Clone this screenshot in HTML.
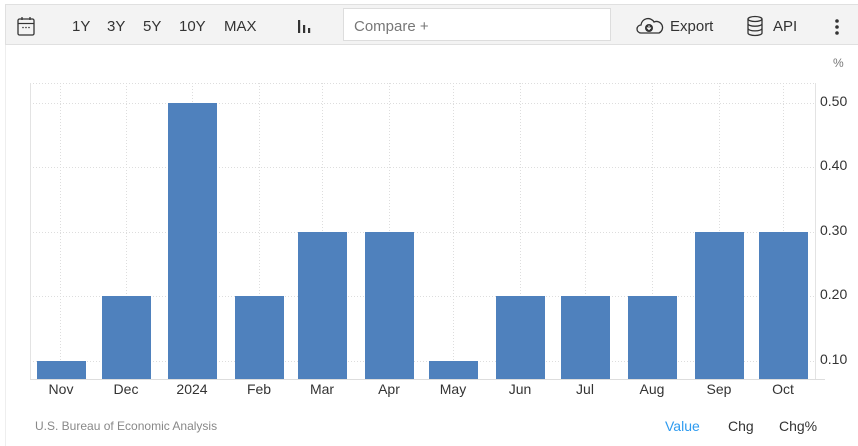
<!DOCTYPE html>
<html><head><style>
body{margin:0;width:858px;height:446px;background:#fff;font-family:"Liberation Sans",Arial,sans-serif;position:relative;overflow:hidden}
.tb{position:absolute;left:5px;top:4px;width:853px;height:41px;background:#f3f3f3;border:1px solid #e0e0e0;border-right:none;box-sizing:border-box}
.t{position:absolute;font-size:15px;color:#333;top:18px}
.cmp{position:absolute;left:343px;top:8px;width:268px;height:33px;background:#fff;border:1px solid #ddd;box-sizing:border-box;font-size:15px;color:#777;padding:9px 10px}
</style></head><body>
<div class="tb"></div>
<div style="position:absolute;left:5px;top:45px;width:1px;height:401px;background:#eee"></div>
<svg style="position:absolute;left:17px;top:16px" width="20" height="22" viewBox="0 0 20 22"><rect x="1" y="3" width="16" height="16" rx="1.5" fill="none" stroke="#333" stroke-width="1.3"/><line x1="1" y1="7.5" x2="17" y2="7.5" stroke="#333" stroke-width="1.2"/><line x1="5" y1="1" x2="5" y2="4" stroke="#333" stroke-width="1.3"/><line x1="13" y1="1" x2="13" y2="4" stroke="#333" stroke-width="1.3"/><circle cx="6" cy="11.5" r=".8" fill="#333"/><circle cx="9" cy="11.5" r=".8" fill="#333"/><circle cx="12" cy="11.5" r=".8" fill="#333"/></svg>
<div class="t" style="left:72px">1Y</div>
<div class="t" style="left:107px">3Y</div>
<div class="t" style="left:143px">5Y</div>
<div class="t" style="left:179px">10Y</div>
<div class="t" style="left:224px">MAX</div>
<svg style="position:absolute;left:297px;top:18px" width="16" height="16"><rect x="1" y="2" width="2.2" height="13" fill="#333"/><rect x="6" y="7" width="2.2" height="8" fill="#333"/><rect x="11" y="10" width="2.2" height="5" fill="#333"/></svg>
<div class="cmp">Compare +</div>
<svg style="position:absolute;left:636px;top:16px" width="28" height="20" viewBox="0 0 28 20"><path d="M7 17H5a4 4 0 0 1 0-8 a7 7 0 0 1 13-3 a5 5 0 0 1 5 11H7z" fill="none" stroke="#333" stroke-width="1.3"/><circle cx="13" cy="12" r="4" fill="#333"/><path d="M11 11.5l2 2 2-2M13 9.5v4" stroke="#fff" stroke-width="1.1" fill="none"/></svg>
<div class="t" style="left:670px">Export</div>
<svg style="position:absolute;left:746px;top:15px" width="18" height="22" viewBox="0 0 18 22"><ellipse cx="9" cy="4" rx="7" ry="2.5" fill="none" stroke="#333" stroke-width="1.3"/><path d="M2 4v14c0 1.4 3.1 2.5 7 2.5s7-1.1 7-2.5V4M2 8.7c0 1.4 3.1 2.5 7 2.5s7-1.1 7-2.5M2 13.4c0 1.4 3.1 2.5 7 2.5s7-1.1 7-2.5" fill="none" stroke="#333" stroke-width="1.3"/></svg>
<div class="t" style="left:773px">API</div>
<svg style="position:absolute;left:834px;top:18px" width="6" height="18"><circle cx="3" cy="3" r="1.8" fill="#333"/><circle cx="3" cy="9" r="1.8" fill="#333"/><circle cx="3" cy="15" r="1.8" fill="#333"/></svg>
<div style="position:absolute;left:833px;top:56px;font-size:12px;color:#777">%</div>
<svg style="position:absolute;left:0;top:0" width="858" height="446">
<g stroke="#ddd" stroke-dasharray="1,2" stroke-width="1">
<line x1="30" y1="83.5" x2="815" y2="83.5"/><line x1="30" y1="103.5" x2="815" y2="103.5"/><line x1="30" y1="167.5" x2="815" y2="167.5"/><line x1="30" y1="232.5" x2="815" y2="232.5"/><line x1="30" y1="296.5" x2="815" y2="296.5"/><line x1="30" y1="361.5" x2="815" y2="361.5"/>
<line x1="60.5" y1="83" x2="60.5" y2="379"/><line x1="126.5" y1="83" x2="126.5" y2="379"/><line x1="192.5" y1="83" x2="192.5" y2="379"/><line x1="259.5" y1="83" x2="259.5" y2="379"/><line x1="322.5" y1="83" x2="322.5" y2="379"/><line x1="389.5" y1="83" x2="389.5" y2="379"/><line x1="453.5" y1="83" x2="453.5" y2="379"/><line x1="520.5" y1="83" x2="520.5" y2="379"/><line x1="585.5" y1="83" x2="585.5" y2="379"/><line x1="652.5" y1="83" x2="652.5" y2="379"/><line x1="719.5" y1="83" x2="719.5" y2="379"/><line x1="783.5" y1="83" x2="783.5" y2="379"/>
</g>
<line x1="30.5" y1="83" x2="30.5" y2="379" stroke="#e3e3e3"/>
<line x1="815.5" y1="83" x2="815.5" y2="379" stroke="#e3e3e3"/>
<line x1="30" y1="379.5" x2="825" y2="379.5" stroke="#ddd"/>
<g fill="#4f81bd">
<rect x="37" y="361" width="49" height="18"/><rect x="102" y="296" width="49" height="83"/><rect x="168" y="103" width="49" height="276"/><rect x="235" y="296" width="49" height="83"/><rect x="298" y="232" width="49" height="147"/><rect x="365" y="232" width="49" height="147"/><rect x="429" y="361" width="49" height="18"/><rect x="496" y="296" width="49" height="83"/><rect x="561" y="296" width="49" height="83"/><rect x="628" y="296" width="49" height="83"/><rect x="695" y="232" width="49" height="147"/><rect x="759" y="232" width="49" height="147"/>
</g>
<g font-family="Liberation Sans,Arial,sans-serif" font-size="14" fill="#333">
<text x="820" y="106">0.50</text><text x="820" y="170">0.40</text><text x="820" y="235">0.30</text><text x="820" y="299">0.20</text><text x="820" y="364">0.10</text>
<g text-anchor="middle"><text x="61" y="394">Nov</text><text x="126" y="394">Dec</text><text x="192" y="394">2024</text><text x="259" y="394">Feb</text><text x="322" y="394">Mar</text><text x="389" y="394">Apr</text><text x="453" y="394">May</text><text x="520" y="394">Jun</text><text x="585" y="394">Jul</text><text x="652" y="394">Aug</text><text x="719" y="394">Sep</text><text x="783" y="394">Oct</text></g>
</g>
<text x="35" y="430" font-family="Liberation Sans,Arial,sans-serif" font-size="12" fill="#888">U.S. Bureau of Economic Analysis</text>
<g font-family="Liberation Sans,Arial,sans-serif" font-size="14"><text x="665" y="431" fill="#2e9bf0">Value</text><text x="728" y="431" fill="#333">Chg</text><text x="779" y="431" fill="#333">Chg%</text></g>
</svg>
</body></html>
